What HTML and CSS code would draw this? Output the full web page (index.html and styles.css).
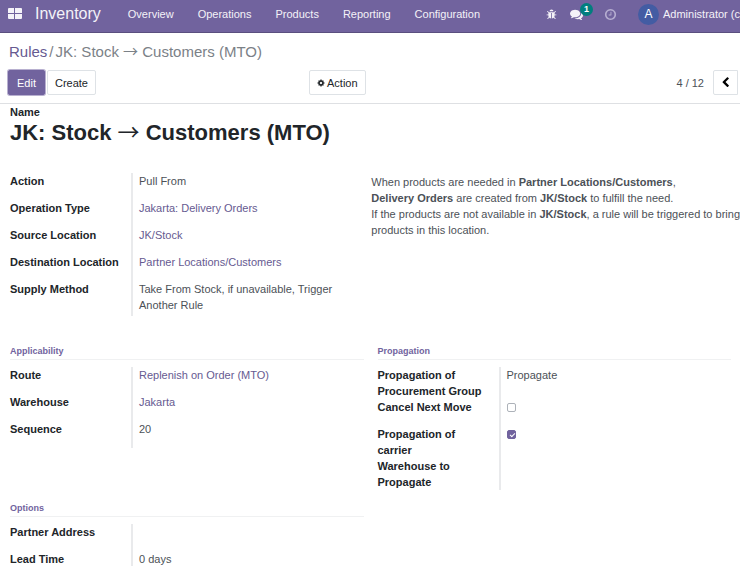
FILE: index.html
```html
<!DOCTYPE html>
<html lang="en">
<head>
<meta charset="utf-8">
<title>Inventory - Rules</title>
<link rel="stylesheet" href="styles.css">
</head>
<body>
<header class="navbar">
  <button class="apps" aria-label="Apps">
    <svg width="14" height="12" viewBox="0 0 14 12"><path d="M1 0h5v5H0V1a1 1 0 0 1 1-1zM7 0h6a1 1 0 0 1 1 1v4H7zM0 6h6v5H1a1 1 0 0 1-1-1zM7 6h7v4a1 1 0 0 1-1 1H7z"/></svg>
  </button>
  <a class="brand" href="#">Inventory</a>
  <nav class="menu">
    <a href="#">Overview</a>
    <a href="#">Operations</a>
    <a href="#">Products</a>
    <a href="#">Reporting</a>
    <a href="#">Configuration</a>
  </nav>
  <div class="systray">
    <button class="tray" aria-label="Debug">
      <svg width="11" height="11" viewBox="0 0 1792 1792"><path d="M1696 960q0 26-19 45t-45 19h-224q0 171-67 290l208 209q19 19 19 45t-19 45q-18 19-45 19t-45-19l-198-197q-5 5-15 13t-42 28.500-65 36.500-82 29-97 13v-896h-128v896q-51 0-101.500-13.500t-87-33-66-39-43.500-32.500l-15-14-183 207q-20 21-48 21-24 0-43-16-19-18-20.500-44.500t15.500-46.500l202-227q-58-114-58-274h-224q-26 0-45-19t-19-45 19-45 45-19h224v-294l-173-173q-19-19-19-45t19-45 45-19 45 19l173 173h844l173-173q19-19 45-19t45 19 19 45-19 45l-173 173v294h224q26 0 45 19t19 45zm-480-576h-640q0-133 93.500-226.500t226.500-93.500 226.500 93.500 93.500 226.500z"/></svg>
    </button>
    <button class="tray" aria-label="Messages">
      <svg width="13" height="13" viewBox="0 0 1792 1792"><path d="M1408 768q0 139-94 257t-256.500 186.500-353.500 68.500q-86 0-176-16-124 88-278 128-36 9-86 16h-3q-11 0-20.500-8t-11.500-21q-1-3-1-6.500t.5-6.500 2-6l2.500-5 3.500-5.500 4-5 4.500-5 4-4.500q5-6 23-25t26-29.500 22.500-29 25-38.500 20.500-44q-124-72-195-177t-71-224q0-139 94-257t256.500-186.500 353.500-68.500 353.500 68.500 256.500 186.500 94 257zm384 256q0 120-71 224.500t-195 176.500q10 24 20.500 44t25 38.500 22.500 29 26 29.500 23 25q1 1 4 4.500t4.500 5 4 5 3.500 5.500l2.500 5 2 6 .5 6.500-1 6.500q-3 14-13 22t-22 7q-50-7-86-16-154-40-278-128-90 16-176 16-271 0-472-132 58 4 88 4 161 0 309-45t264-129q125-92 192-212t67-254q0-77-23-152 129 71 204 178t75 230z"/></svg>
      <span class="badge">1</span>
    </button>
    <button class="tray muted" aria-label="Activities">
      <svg width="13" height="13" viewBox="0 0 1792 1792"><path d="M1024 544v448q0 14-9 23t-23 9h-320q-14 0-23-9t-9-23v-64q0-14 9-23t23-9h224v-352q0-14 9-23t23-9h64q14 0 23 9t9 23zm416 352q0-148-73-273t-198-198-273-73-273 73-198 198-73 273 73 273 198 198 273 73 273-73 198-198 73-273zm224 0q0 209-103 385.500t-279.500 279.500-385.500 103-385.500-103-279.500-279.500-103-385.500 103-385.500 279.500-279.500 385.500-103 385.500 103 279.500 279.500 103 385.500z"/></svg>
    </button>
    <button class="user"><span class="avatar">A</span>Administrator (c</button>
  </div>
</header>

<section class="control-panel">
  <div class="breadcrumb"><a href="#">Rules</a><span>/</span><span>JK: Stock <span class="arrow">→</span> Customers (MTO)</span></div>
  <div class="toolbar">
    <div class="main-buttons">
      <button class="btn primary">Edit</button>
      <button class="btn">Create</button>
    </div>
    <button class="btn action">
      <svg width="8" height="8" viewBox="0 0 1792 1792"><path d="M1152 896q0-106-75-181t-181-75-181 75-75 181 75 181 181 75 181-75 75-181zm512-109v222q0 12-8 23t-20 13l-185 28q-19 54-39 91 35 50 107 138 10 12 10 25t-9 23q-27 37-99 108t-94 71q-12 0-26-9l-138-108q-44 23-91 38-16 136-29 186-7 28-36 28h-222q-14 0-24.500-8.500t-11.500-21.500l-28-184q-49-16-90-37l-141 107q-10 9-25 9-14 0-25-11-126-114-165-168-7-10-7-23 0-12 8-23 15-21 51-66.500t54-70.500q-27-50-41-99l-183-27q-13-2-21-12.500t-8-23.500v-222q0-12 8-23t19-13l186-28q14-46 39-92-40-57-107-138-10-12-10-24 0-10 9-23 26-36 98.500-107.500t94.500-71.500q13 0 26 10l138 107q44-23 91-38 16-136 29-186 7-28 36-28h222q14 0 24.500 8.500t11.500 21.500l28 184q49 16 90 37l142-107q9-9 24-9 13 0 25 10 129 119 165 170 7 8 7 22 0 12-8 23-15 21-51 66.500t-54 70.500q26 50 41 98l183 28q13 2 21 12.500t8 23.500z"/></svg>
      Action
    </button>
    <div class="pager">
      <span>4 / 12</span>
      <button class="btn step" aria-label="Previous">
        <svg width="11" height="11" viewBox="0 0 1792 1792"><path d="M1427 301l-531 531 531 531q19 19 19 45t-19 45l-166 166q-19 19-45 19t-45-19l-742-742q-19-19-19-45t19-45l742-742q19-19 45-19t45 19l166 166q19 19 19 45t-19 45z"/></svg>
      </button>
    </div>
  </div>
</section>

<main class="sheet">
  <div class="name-label">Name</div>
  <h1>JK: Stock <span class="arrow">→</span> Customers (MTO)</h1>

  <div class="groups intro">
    <dl class="fields">
      <dt>Action</dt><dd>Pull From</dd>
      <dt>Operation Type</dt><dd><a href="#">Jakarta: Delivery Orders</a></dd>
      <dt>Source Location</dt><dd><a href="#">JK/Stock</a></dd>
      <dt>Destination Location</dt><dd><a href="#">Partner Locations/Customers</a></dd>
      <dt>Supply Method</dt><dd>Take From Stock, if unavailable, Trigger<br>Another Rule</dd>
    </dl>
    <p class="summary">When products are needed in <b>Partner Locations/Customers</b>,<br><b>Delivery Orders</b> are created from <b>JK/Stock</b> to fulfill the need.<br>If the products are not available in <b>JK/Stock</b>, a rule will be triggered to bring<br>products in this location.</p>
  </div>

  <div class="groups">
    <section>
      <h2>Applicability</h2>
      <dl class="fields">
        <dt>Route</dt><dd><a href="#">Replenish on Order (MTO)</a></dd>
        <dt>Warehouse</dt><dd><a href="#">Jakarta</a></dd>
        <dt>Sequence</dt><dd>20</dd>
      </dl>
    </section>
    <section>
      <h2>Propagation</h2>
      <dl class="fields">
        <dt>Propagation of<br>Procurement Group</dt><dd>Propagate</dd>
        <dt><label for="cancel">Cancel Next Move</label></dt><dd><input type="checkbox" id="cancel"></dd>
        <dt><label for="carrier">Propagation of<br>carrier</label></dt><dd><input type="checkbox" id="carrier" checked></dd>
        <dt>Warehouse to<br>Propagate</dt><dd></dd>
      </dl>
    </section>
  </div>

  <div class="groups">
    <section>
      <h2>Options</h2>
      <dl class="fields">
        <dt>Partner Address</dt><dd></dd>
        <dt>Lead Time</dt><dd>0 days</dd>
      </dl>
    </section>
  </div>
</main>
</body>
</html>
```
FILE: styles.css
```css
* {
  box-sizing: border-box;
}

html {
  overflow: hidden;
}

body {
  margin: 0;
  background: #fff;
  color: #4c5157;
  font: 11px/16px "Liberation Sans", Arial, sans-serif;
}

a {
  color: #665a91;
  text-decoration: none;
}

button {
  border: 0;
  padding: 0;
  background: none;
  color: inherit;
  font: inherit;
}

svg {
  display: block;
  fill: currentColor;
}

.arrow {
  font-family: "Noto Sans CJK JP", sans-serif;
  font-weight: normal;
  line-height: 0;
}

.navbar {
  display: flex;
  align-items: center;
  height: 33px;
  padding: 0 0 4px 8px;
  border-bottom: 1px solid #5a4f7f;
  background: #71639e;
  color: #f4f2f8;
  white-space: nowrap;
}

.navbar a {
  color: inherit;
}

.brand {
  margin-left: 13px;
  font-size: 16px;
}

.menu {
  display: flex;
  gap: 24px;
  margin-left: 27px;
}

.systray {
  display: flex;
  align-items: center;
  gap: 21px;
  margin-left: auto;
}

.tray {
  position: relative;
}

.tray:first-child {
  margin-right: -8px;
}

.muted {
  color: #b5add0;
}

.badge {
  position: absolute;
  top: -5px;
  left: 10px;
  width: 13px;
  height: 13px;
  border-radius: 7px;
  background: #017e7e;
  color: #fff;
  font-size: 9px;
  font-weight: bold;
  line-height: 13px;
  text-align: center;
}

.user {
  display: flex;
  align-items: center;
  gap: 4px;
}

.avatar {
  width: 21px;
  height: 21px;
  border-radius: 50%;
  background: #435ca3;
  color: #fff;
  font-size: 12px;
  line-height: 21px;
}

.control-panel {
  padding: 9px 2px 8px 8px;
  border-bottom: 1px solid #dee0e3;
}

.breadcrumb {
  display: flex;
  gap: 2px;
  padding-left: 1px;
  color: #7b8187;
  font-size: 15px;
  line-height: 20px;
}

.toolbar {
  display: grid;
  grid-template-columns: 301px auto 1fr;
  align-items: center;
  margin-top: 8px;
}

.main-buttons {
  display: flex;
  gap: 2px;
}

.btn {
  display: flex;
  align-items: center;
  gap: 2px;
  height: 25px;
  padding: 0 7px;
  border: 1px solid #dee2e6;
  border-radius: 2px;
  background: #fff;
  color: #212529;
}

.primary {
  padding: 0 8px;
  border-color: #71639e;
  background: #71639e;
  color: #fff;
  box-shadow: 0 0 0 1px #b8b0d0;
}

.pager {
  display: flex;
  align-items: center;
  justify-content: flex-end;
  gap: 9px;
}

.step {
  padding: 0 6px;
  border-radius: 2px 0 0 2px;
  color: #000;
}

.sheet {
  padding: 0 9px 0 10px;
}

.name-label {
  color: #212529;
  font-weight: bold;
}

h1 {
  margin: 0 0 28px;
  color: #212529;
  font-size: 22px;
  line-height: 25px;
}

.groups {
  display: grid;
  grid-template-columns: minmax(0, 1fr) minmax(0, 1fr);
  column-gap: 14px;
  margin-bottom: 10px;
}

/* The rule summary keeps its own line breaks and may use the right margin. */
.intro {
  grid-template-columns: minmax(0, 1fr) max-content;
  column-gap: 0;
  margin: 0 -9px 27px 0;
}

h2 {
  margin: 0 0 7px;
  border-bottom: 1px solid #f0f1f2;
  color: #71639e;
  font-size: 9px;
  line-height: 16px;
}

.fields {
  display: grid;
  grid-template-columns: 121px 1fr;
  margin: 0;
}

dt {
  min-height: 27px;
  color: #212529;
  font-weight: bold;
}

dd {
  margin: 0;
  padding: 0 0 3px 6px;
  border-left: 2px solid #e9eaec;
}

.summary {
  margin: 1px 0 0;
  white-space: nowrap;
}

input {
  display: block;
  appearance: none;
  width: 9px;
  height: 9px;
  margin: 4px 0 0;
  border: 1px solid #adb2b9;
  border-radius: 2px;
  background: #fff;
}

input:checked {
  border-color: #71639e;
  background: #71639e;
}

input:checked::after {
  content: "";
  display: block;
  width: 4px;
  height: 2px;
  margin: 2px;
  border: solid #fff;
  border-width: 0 0 1px 1px;
  transform: rotate(-45deg);
}
```
